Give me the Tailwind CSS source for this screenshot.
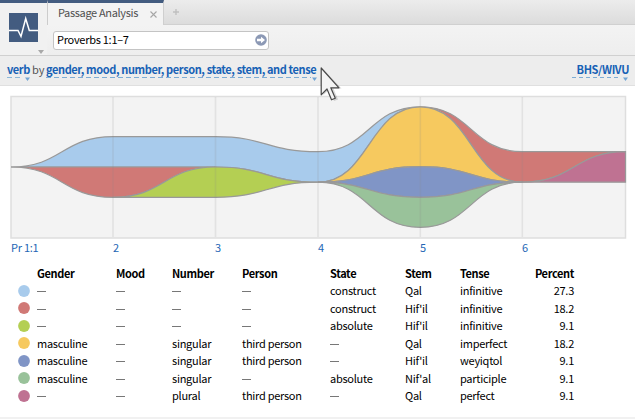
<!DOCTYPE html>
<html lang="en">
<head>
<meta charset="utf-8">
<title>Passage Analysis</title>
<script src="https://cdn.jsdelivr.net/npm/@tailwindcss/browser@4"></script>
</head>
<body class="relative flex h-[419px] w-[635px] flex-col overflow-hidden bg-white font-['Noto_Sans_CJK_SC','Noto_Sans',sans-serif] text-[11px] leading-[17px] tracking-[-0.27px] text-black">
<header class="flex h-[56px] shrink-0 border-b border-[#d0d0d0]">
  <div class="relative w-[47px] border-t-3 border-[#435c80] bg-[#f1f1f1]">
    <svg class="mt-[10px] ml-[9px]" width="29" height="29" viewBox="0 0 29 29"><rect width="29" height="29" fill="#435c80"/><path d="M0 17.5H9L12 23.5L16.7 5.5L20.3 17.5H29" fill="none" stroke="#fff" stroke-width="1.5"/></svg>
    <svg class="absolute top-[47px] left-[38px]" width="6" height="4"><path d="M0 0H6L3 4Z" fill="#a8a8a8"/></svg>
  </div>
  <div class="flex flex-1 flex-col">
    <div class="flex h-[25px]">
      <div class="flex w-[117px] items-center border-t-3 border-t-[#435c80] border-l border-l-[#cccccc] border-r border-r-[#cfcfcf] bg-[#f3f3f3] pl-[10px] text-[#505050]">
        <span class="-mt-[3px] w-[92px] whitespace-nowrap tracking-[-0.34px]">Passage Analysis</span>
        <svg width="7" height="7" viewBox="0 0 7 7"><path d="M.5 .5L6.5 6.5M6.5 .5L.5 6.5" stroke="#a6a6a6" stroke-width="1.1"/></svg>
      </div>
      <div class="flex flex-1 items-center border-b border-[#d0d0d0] bg-linear-to-b from-[#ececec] to-[#dcdcdc] pl-[9px]">
        <svg width="6" height="6"><path d="M3 0V6M0 3H6" stroke="#c0c0c0" stroke-width="1.4"/></svg>
      </div>
    </div>
    <div class="flex flex-1 bg-linear-to-b from-[#f3f3f3] to-[#eeeeee] pt-[6px] pl-[6px]">
      <div class="flex h-[19px] w-[216px] items-center justify-between rounded-[3px] border border-[#c4c4c4] bg-white pr-[1px] pl-[3px]">
        <span class="-mt-[3px]">Proverbs 1:1–7</span>
        <svg class="-mt-px" width="12" height="12" viewBox="0 0 12 12"><circle cx="6" cy="6" r="5.8" fill="#8c99b5"/><path d="M2 4.800H6V2.700L10 6L6 9.300V7.200H2Z" fill="#fff"/></svg>
      </div>
    </div>
  </div>
</header>
<nav class="flex h-[30px] shrink-0 justify-between border-b border-[#e0e0e0] bg-[#ededed] pr-[6px] pl-[7px] font-bold tracking-[-0.39px] text-[#1761b5]">
  <div class="flex whitespace-nowrap pt-[5px]">
    <div class="relative h-[17px] w-[23px]"><span>verb</span><svg class="absolute top-[16px] left-0" width="25" height="4"><path d="M0 .5H16" stroke="#8db8da" stroke-dasharray="5 3"/><path d="M18 .5H23L20.500 4Z" fill="#72a5d4"/></svg></div>
    <span class="ml-[2px] w-[14px] font-normal tracking-normal text-[#555]">by</span>
    <div class="relative h-[17px] w-[272px]"><span>gender, mood, number, person, state, stem, and tense</span><svg class="absolute top-[16px] left-0" width="274" height="4"><path d="M0 .5H265" stroke="#7dacd5" stroke-dasharray="5 3"/><path d="M266 .5H271L268.500 4Z" fill="#72a5d4"/></svg></div>
  </div>
  <div class="relative mt-[5px] h-[17px] w-[56px] text-right"><span>BHS/WIVU</span><svg class="absolute top-[16px] -left-px" width="57" height="4"><path d="M0 .5H49" stroke="#7dacd5" stroke-dasharray="4 3"/><path d="M51 .5H56L53.500 4Z" fill="#72a5d4"/></svg></div>
</nav>
<main class="relative">
  <svg class="block" width="635" height="153" viewBox="0 86 635 153">
    <rect x="11" y="96.500" width="614.500" height="141.500" fill="#f3f3f3" stroke="#dedede" stroke-width="1.5"/>
    <g stroke="#999" stroke-width="1.2">
      <path fill="#a8cbec" d="M11 167C62 167 62 136.700 113 136.700H215.500C266.500 136.700 266.500 151.700 318 151.700C369 151.700 369 106.800 420.300 106.800C369 106.800 369 182.200 318 182.200C266.500 182.200 266.500 167 215.500 167Z"/>
      <path fill="#d07976" d="M11 167H215.500C164 167 164 197.300 113 197.300C62 197.300 62 167 11 167Z"/>
      <path fill="#b4cf53" d="M113 197.300C164 197.300 164 167 215.500 167C266.500 167 266.500 182.200 318 182.200C266.500 182.200 266.500 197.300 215.500 197.300Z"/>
      <path fill="#d07976" d="M420.300 106.800C471 106.800 471 151.700 522.300 151.700H625.500C574 151.700 574 182.200 522.300 182.200C471 182.200 471 106.800 420.300 106.800Z"/>
      <path fill="#f6c95f" d="M318 182.200C369 182.200 369 106.800 420.300 106.800C471 106.800 471 182.200 522.300 182.200C471 182.200 471 166.700 420.300 166.700C369 166.700 369 182.200 318 182.200Z"/>
      <path fill="#8095c6" d="M318 182.200C369 182.200 369 166.700 420.300 166.700C471 166.700 471 182.200 522.300 182.200C471 182.200 471 197.300 420.300 197.300C369 197.300 369 182.200 318 182.200Z"/>
      <path fill="#99c29a" d="M318 182.200C369 182.200 369 197.300 420.300 197.300C471 197.300 471 182.200 522.300 182.200C471 182.200 471 227.300 420.300 227.300C369 227.300 369 182.200 318 182.200Z"/>
      <path fill="#bf7292" d="M522.300 182.200C574 182.200 574 151.700 625.500 151.700V182.200Z"/>
    </g>
    <path d="M113 97V237M215.500 97V237M318 97V237M420.300 97V237M522.300 97V237" stroke="#888" stroke-opacity=".16" stroke-width="1.6"/>
  </svg>
  <div class="grid h-[26px] grid-cols-[102px_102px_103px_102px_102px_1fr] pl-[11px] text-[#2466b5]">
    <span>Pr 1:1</span><span>2</span><span>3</span><span>4</span><span>5</span><span>6</span>
  </div>
  <table class="ml-[18px] w-[556px] table-fixed border-collapse whitespace-nowrap text-left">
    <colgroup><col class="w-[19px]"><col class="w-[79px]"><col class="w-[56px]"><col class="w-[70px]"><col class="w-[88px]"><col class="w-[75px]"><col class="w-[55px]"><col><col class="w-[45px]"></colgroup>
    <thead><tr class="h-[17px] tracking-[-0.37px]"><th class="p-0"></th><th class="p-0">Gender</th><th class="p-0">Mood</th><th class="p-0">Number</th><th class="p-0">Person</th><th class="p-0">State</th><th class="p-0">Stem</th><th class="p-0">Tense</th><th class="p-0 text-right">Percent</th></tr></thead>
    <tbody id="rows"></tbody>
  </table>
</main>
<div class="absolute bottom-0 left-0 h-[2px] w-full bg-[#f1f1f1]"></div>
<svg class="absolute top-[65px] left-[319px]" width="25" height="38" viewBox="0 0 25 38">
  <path d="M4.500 4.500V30L10.500 24.500L15 36L19 34.500L14.500 23.500H22.500Z" fill="#000" opacity=".15"/>
  <path d="M2.200 3V29.800L8 24L12.500 34.800L16.300 33.300L11.800 22.800H20Z" fill="#f3f3f3" stroke="#484848" stroke-width="1.2" stroke-linejoin="round"/>
</svg>
<script>
const rows = [
  ['#a8cbec','—','—','—','—','construct','Qal','infinitive','27.3'],
  ['#d07976','—','—','—','—','construct',"Hif'il",'infinitive','18.2'],
  ['#b4cf53','—','—','—','—','absolute',"Hif'il",'infinitive','9.1'],
  ['#f6c95f','masculine','—','singular','third person','—','Qal','imperfect','18.2'],
  ['#8095c6','masculine','—','singular','third person','—',"Hif'il",'weyiqtol','9.1'],
  ['#99c29a','masculine','—','singular','—','absolute',"Nif'al",'participle','9.1'],
  ['#bf7292','—','—','plural','third person','—','Qal','perfect','9.1']
];
document.getElementById('rows').innerHTML = rows.map(([color, ...cells]) =>
  `<tr class="h-[17.500px]"><td class="p-0"><svg width="12" height="12"><circle cx="6" cy="6" r="5.9" fill="${color}"/></svg></td>` +
  cells.map((c, i) => `<td class="p-0 ${i === 7 ? 'text-right' : ''}">${c === '—' ? '<span class="inline-block h-px w-[9px] bg-[#777] align-[3px]" aria-label="none"></span>' : c}</td>`).join('') + '</tr>').join('');
</script>
</body>
</html>
